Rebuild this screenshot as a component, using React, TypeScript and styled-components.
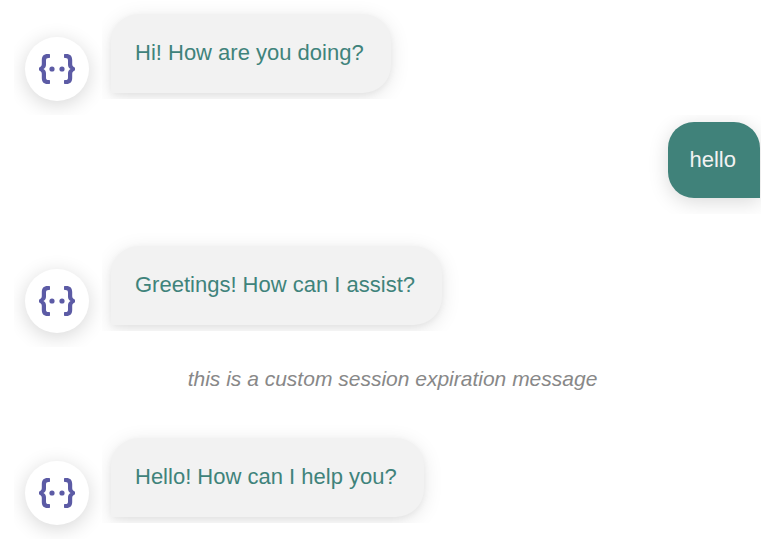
import React from "react";
import styled, { createGlobalStyle } from "styled-components";

const GlobalStyle = createGlobalStyle`
  * {
    box-sizing: border-box;
  }

  body {
    margin: 0;
    background: #ffffff;
    font-family: "Liberation Sans", Arial, Helvetica, sans-serif;
    font-size: 22px;
    line-height: 30px;
  }
`;

const Conversation = styled.main`
  display: flex;
  flex-direction: column;
`;

const BotRow = styled.article`
  display: flex;
  align-items: flex-end;
  padding-left: 14px;
`;

const AvatarFrame = styled.div`
  flex: none;
  overflow: hidden;
  padding: 14px 13px 14px 11px;
`;

const Avatar = styled.div`
  display: flex;
  align-items: center;
  justify-content: center;
  width: 64px;
  height: 64px;
  border-radius: 50%;
  background: #ffffff;
  box-shadow: 0 4px 20px rgba(0, 0, 0, 0.16);
`;

const BubbleFrame = styled.div`
  flex: 1;
  min-width: 0;
  overflow: hidden;
  margin-bottom: 16px;
  padding: 14px 20px 6px 9px;
`;

const BotBubble = styled.p`
  width: fit-content;
  margin: 0;
  padding: 24px 27px 25px 24px;
  border-radius: 28px 28px 28px 0;
  background: #f2f2f2;
  color: #3f837b;
  box-shadow:
    0 2px 6px rgba(0, 0, 0, 0.05),
    0 4px 20px rgba(0, 0, 0, 0.1);
`;

const UserRow = styled.article`
  display: flex;
  justify-content: flex-end;
  overflow: hidden;
  margin-right: 15px;
  padding: 7px 1px 16px 20px;
`;

const UserBubble = styled.p`
  margin: 0;
  padding: 23px 24px 23px 22px;
  border-radius: 26px 26px 0 26px;
  background: #40827a;
  color: #f2f2f2;
  box-shadow: 0 4px 20px rgba(0, 0, 0, 0.15);
`;

const SessionNotice = styled.p`
  margin: 18px 0 31px;
  padding-left: 9px;
  color: #888888;
  font-size: 21px;
  font-style: italic;
  line-height: 28px;
  text-align: center;
`;

const Spacer = styled.div`
  height: 18px;
`;

function BracesLogo() {
  return (
    <svg width="38" height="32" viewBox="0 0 38 32" fill="#5c5ba5" aria-hidden="true">
      <path d="M11.3 1H9.6C5.6 1 3.8 3.2 3.8 7V11C3.8 12.8 3 13.6 1.6 14.2Q1 14.5 1 15.2V16.8Q1 17.5 1.6 17.8C3 18.4 3.8 19.2 3.8 21V25C3.8 28.8 5.6 31 9.6 31H11.3Q12 31 12 30.3V27.7Q12 27 11.3 27H10.6C8.7 27 8 26.2 8 24.4V20.6C8 18.4 7.2 17 5.4 16C7.2 15 8 13.6 8 11.4V7.6C8 5.8 8.7 5 10.6 5H11.3Q12 5 12 4.3V1.7Q12 1 11.3 1Z" />
      <path d="M26.7 1H28.4C32.4 1 34.2 3.2 34.2 7V11C34.2 12.8 35 13.6 36.4 14.2Q37 14.5 37 15.2V16.8Q37 17.5 36.4 17.8C35 18.4 34.2 19.2 34.2 21V25C34.2 28.8 32.4 31 28.4 31H26.7Q26 31 26 30.3V27.7Q26 27 26.7 27H27.4C29.3 27 30 26.2 30 24.4V20.6C30 18.4 30.8 17 32.6 16C30.8 15 30 13.6 30 11.4V7.6C30 5.8 29.3 5 27.4 5H26.7Q26 5 26 4.3V1.7Q26 1 26.7 1Z" />
      <circle cx="14" cy="16" r="2.6" />
      <circle cx="24" cy="16" r="2.6" />
    </svg>
  );
}

function BotMessage({ text }: { text: string }) {
  return (
    <BotRow>
      <AvatarFrame>
        <Avatar>
          <BracesLogo />
        </Avatar>
      </AvatarFrame>
      <BubbleFrame>
        <BotBubble>{text}</BotBubble>
      </BubbleFrame>
    </BotRow>
  );
}

export default function App() {
  return (
    <>
      <GlobalStyle />
      <Conversation>
        <BotMessage text="Hi! How are you doing?" />
        <UserRow>
          <UserBubble>hello</UserBubble>
        </UserRow>
        <Spacer />
        <BotMessage text="Greetings! How can I assist?" />
        <SessionNotice>this is a custom session expiration message</SessionNotice>
        <BotMessage text="Hello! How can I help you?" />
      </Conversation>
    </>
  );
}
